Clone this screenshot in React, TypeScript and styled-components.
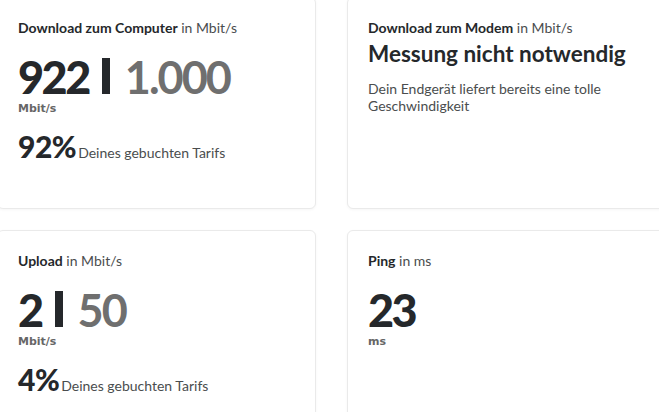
import React from 'react';
import styled, { createGlobalStyle } from 'styled-components';

const GlobalStyle = createGlobalStyle`
  html, body {
    margin: 0;
    padding: 0;
    background: #ffffff;
    overflow: hidden;
  }
  body {
    font-family: 'Lato', 'Open Sans', sans-serif;
    color: #25282b;
  }
`;

interface IResult {
  title: string;
  unit: string;
  value?: string;
  booked?: string;
  valueUnit?: string;
  percent?: string;
  headline?: string;
  note?: string;
}

const results: IResult[] = [
  { title: 'Download zum Computer', unit: 'Mbit/s', value: '922', booked: '1.000', valueUnit: 'Mbit/s', percent: '92%' },
  {
    title: 'Download zum Modem',
    unit: 'Mbit/s',
    headline: 'Messung nicht notwendig',
    note: 'Dein Endgerät liefert bereits eine tolle Geschwindigkeit',
  },
  { title: 'Upload', unit: 'Mbit/s', value: '2', booked: '50', valueUnit: 'Mbit/s', percent: '4%' },
  { title: 'Ping', unit: 'ms', value: '23', valueUnit: 'ms' },
];

const ResultCard = ({ item }: { item: IResult }) => (
  <Card>
    <Title>
      <strong>{item.title}</strong> in {item.unit}
    </Title>
    {item.headline && <Headline>{item.headline}</Headline>}
    {item.note && <Note>{item.note}</Note>}
    {item.value && (
      <>
        <BigValue>
          <Measured>{item.value}</Measured>
          {item.booked && (
            <>
              <Divider aria-label="|" />
              <Booked>{item.booked}</Booked>
            </>
          )}
        </BigValue>
        <ValueUnit>{item.valueUnit}</ValueUnit>
      </>
    )}
    {item.percent && (
      <PercentRow>
        <Percent>{item.percent}</Percent>
        <PercentText>Deines gebuchten Tarifs</PercentText>
      </PercentRow>
    )}
  </Card>
);

export default function App() {
  return (
    <>
      <GlobalStyle />
      <Grid>
        {results.map((item) => (
          <ResultCard key={item.title} item={item} />
        ))}
      </Grid>
    </>
  );
}

const Grid = styled.div`
  display: grid;
  grid-template-columns: 319px 319px;
  column-gap: 31px;
  row-gap: 21px;
  margin: -3px 0 0 -3px;
`;

const Card = styled.div`
  box-sizing: border-box;
  height: 212px;
  padding: 20px 20px;
  background: #ffffff;
  border: 1px solid #eaeaea;
  border-radius: 6px;
  box-shadow: 0 1px 3px rgba(0, 0, 0, 0.04);
  display: flex;
  flex-direction: column;
  align-items: flex-start;
`;

const Title = styled.div`
  font-size: 14px;
  line-height: 20px;
  color: #4a4d4e;
  strong {
    font-weight: 700;
    color: #25282b;
  }
`;

const BigValue = styled.div`
  margin-top: 19px;
  display: flex;
  align-items: baseline;
  font-size: 45px;
  line-height: 40px;
  color: #25282b;
`;

const Measured = styled.span`
  font-weight: 900;
  letter-spacing: -2.5px;
`;

const Divider = styled.span`
  display: inline-block;
  width: 8px;
  height: 36px;
  margin: 0 15px -4px 13px;
  background: #25282b;
`;

const Booked = styled.span`
  font-weight: 700;
  letter-spacing: -2px;
  color: #6f6f6f;
`;

const ValueUnit = styled.div`
  margin-top: 5px;
  font-family: 'DejaVu Sans', sans-serif;
  font-size: 11px;
  font-weight: 700;
  line-height: 14px;
  color: #666666;
`;

const PercentRow = styled.div`
  margin-top: 14px;
  display: flex;
  align-items: baseline;
  gap: 2px;
`;

const Percent = styled.span`
  font-size: 30px;
  font-weight: 900;
  line-height: 32px;
  letter-spacing: -0.5px;
`;

const PercentText = styled.span`
  font-size: 14px;
  color: #4a4d4e;
`;

const Headline = styled.div`
  margin-top: 2px;
  font-size: 22.5px;
  font-weight: 700;
  line-height: 28px;
  color: #25282b;
`;

const Note = styled.div`
  margin-top: 12px;
  max-width: 250px;
  font-size: 14px;
  line-height: 17px;
  color: #4a4d4e;
`;
